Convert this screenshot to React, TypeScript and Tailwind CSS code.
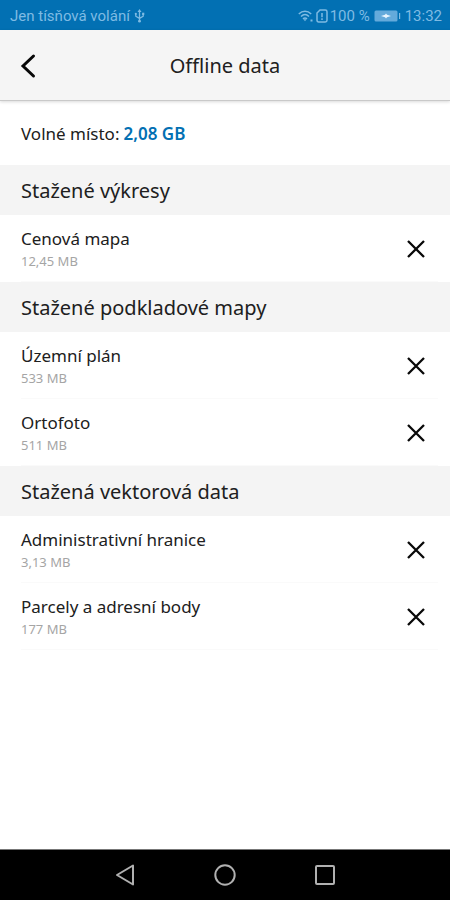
import React from 'react';

type Item = { name: string; size: string };
type Section = { title: string; items: Item[] };

const sections: Section[] = [
  { title: 'Stažené výkresy', items: [{ name: 'Cenová mapa', size: '12,45 MB' }] },
  {
    title: 'Stažené podkladové mapy',
    items: [
      { name: 'Územní plán', size: '533 MB' },
      { name: 'Ortofoto', size: '511 MB' },
    ],
  },
  {
    title: 'Stažená vektorová data',
    items: [
      { name: 'Administrativní hranice', size: '3,13 MB' },
      { name: 'Parcely a adresní body', size: '177 MB' },
    ],
  },
];

function StatusBar() {
  return (
    <div className="flex h-[30px] items-center justify-between bg-[#0270b3] pt-[2px] pr-2 pl-[10px] font-[Roboto,sans-serif] text-[15px] leading-5 text-[#7fbbe3]">
      <div className="flex items-center gap-1">
        <span>Jen tísňová volání</span>
        <svg width="11" height="14" viewBox="0 0 11 14" fill="none" stroke="currentColor" strokeWidth="1.3" aria-hidden="true">
          <path d="M5.5 2v10M1.8 5v2.2l3.7 2.2 3.7-2.2V5" />
          <path d="M5.5 0l2 3h-4z" fill="currentColor" stroke="none" />
          <circle cx="5.5" cy="12.2" r="1.4" fill="currentColor" stroke="none" />
          <circle cx="1.8" cy="4.8" r="1.1" fill="currentColor" stroke="none" />
          <path d="M8.1 3.7h2.2v2.2H8.1z" fill="currentColor" stroke="none" />
        </svg>
      </div>
      <div className="flex items-center">
        <svg width="16" height="14" viewBox="0 0 16 14" fill="none" stroke="currentColor" strokeWidth="1.5" aria-hidden="true">
          <path d="M.8 5C4.5 1.4 9.5 1.4 13.2 5M3 7.5c2.4-2.3 5.6-2.3 8 0M5 9.9c1.3-1.2 2.7-1.2 4 0" />
          <path d="M5.5 10.2h3L7 12.2zM12.5 10.5h2v2h-2z" fill="currentColor" stroke="none" />
        </svg>
        <svg className="ml-[2px]" width="12" height="14" viewBox="0 0 12 14" fill="none" stroke="currentColor" strokeWidth="1.5" aria-hidden="true">
          <path d="M4 1h5.3q1.7 0 1.7 1.7v8.6Q11 13 9.3 13H2.7Q1 13 1 11.3V4z" />
          <path d="M6 4v4.2M6 9.3v1.6" />
        </svg>
        <span className="ml-[2px]">100 %</span>
        <svg className="ml-1" width="27" height="12" viewBox="0 0 27 12" aria-hidden="true">
          <rect x=".5" y=".5" width="23" height="11" rx="1.5" fill="#64aadb" />
          <path d="M25 3h1.2v6H25z" fill="#7fbbe3" />
          <path d="M7 6l4-1.2 1-1.3 1 1.3L17 6l-4 1.2-1 1.3-1-1.3z" fill="#e8f5ff" />
        </svg>
        <span className="ml-1">13:32</span>
      </div>
    </div>
  );
}

function AppHeader() {
  return (
    <header className="relative z-10 grid h-[71px] grid-cols-[56px_1fr_56px] items-center border-b border-[#c9c9c9] bg-[#f5f5f5] pt-[2px] shadow-[0_1px_3px_rgba(0,0,0,0.15)]">
      <button type="button" aria-label="Zpět" className="flex h-14 items-center justify-center">
        <svg width="16" height="26" viewBox="0 0 16 26" fill="none" stroke="#080808" strokeWidth="3" strokeLinecap="round" aria-hidden="true">
          <path d="M13.500 3L3 13l10.500 10" />
        </svg>
      </button>
      <h1 className="text-center text-[20px] leading-7">Offline data</h1>
    </header>
  );
}

function DownloadRow({ item }: { item: Item }) {
  return (
    <li className="ml-[21px] mr-3 flex h-[67px] items-center justify-between border-b border-[#fafafa] pt-[2px]">
      <div>
        <div className="text-[17px] leading-6">{item.name}</div>
        <div className="text-[13px] leading-5 text-[#a5a5a5]">{item.size}</div>
      </div>
      <button type="button" aria-label={`Smazat ${item.name}`} className="flex h-11 w-11 items-center justify-center">
        <svg width="20" height="20" viewBox="0 0 20 20" fill="none" stroke="#080808" strokeWidth="2.3" aria-hidden="true">
          <path d="M2 2l16 16M18 2L2 18" />
        </svg>
      </button>
    </li>
  );
}

function NavigationBar() {
  return (
    <nav aria-label="Systémová navigace" className="flex h-[51px] items-center justify-center gap-[60px] border-t border-[#777] bg-black text-[#b0b0b0]">
      <button type="button" aria-label="Zpět" className="flex h-10 w-10 items-center justify-center">
        <svg width="22" height="24" viewBox="0 0 22 24" fill="none" stroke="currentColor" strokeWidth="2" strokeLinejoin="round" aria-hidden="true">
          <path d="M3 12L19 2.500v19z" />
        </svg>
      </button>
      <button type="button" aria-label="Domů" className="flex h-10 w-10 items-center justify-center">
        <svg width="24" height="24" viewBox="0 0 24 24" fill="none" stroke="currentColor" strokeWidth="2" aria-hidden="true">
          <circle cx="12" cy="12" r="9.7" />
        </svg>
      </button>
      <button type="button" aria-label="Poslední aplikace" className="flex h-10 w-10 items-center justify-center">
        <svg width="22" height="22" viewBox="0 0 22 22" fill="none" stroke="currentColor" strokeWidth="2" aria-hidden="true">
          <rect x="2" y="2" width="18" height="18" rx="1" />
        </svg>
      </button>
    </nav>
  );
}

export default function App() {
  return (
    <div className="flex min-h-screen flex-col bg-white font-['Noto_Sans',sans-serif] text-[#202020]">
      <StatusBar />
      <AppHeader />
      <main className="flex-1">
        <p className="flex h-16 items-center gap-1 px-[21px] pt-[2px] text-[17px] leading-6">
          <span>Volné místo:</span>
          <strong className="font-semibold text-[#0270b3]">2,08 GB</strong>
        </p>
        {sections.map((section) => (
          <section key={section.title}>
            <h2 className="flex h-[50px] items-center bg-[#f4f4f4] px-[21px] pt-[2px] text-[20px] leading-7">{section.title}</h2>
            <ul>
              {section.items.map((item) => (
                <DownloadRow key={item.name} item={item} />
              ))}
            </ul>
          </section>
        ))}
      </main>
      <NavigationBar />
    </div>
  );
}
